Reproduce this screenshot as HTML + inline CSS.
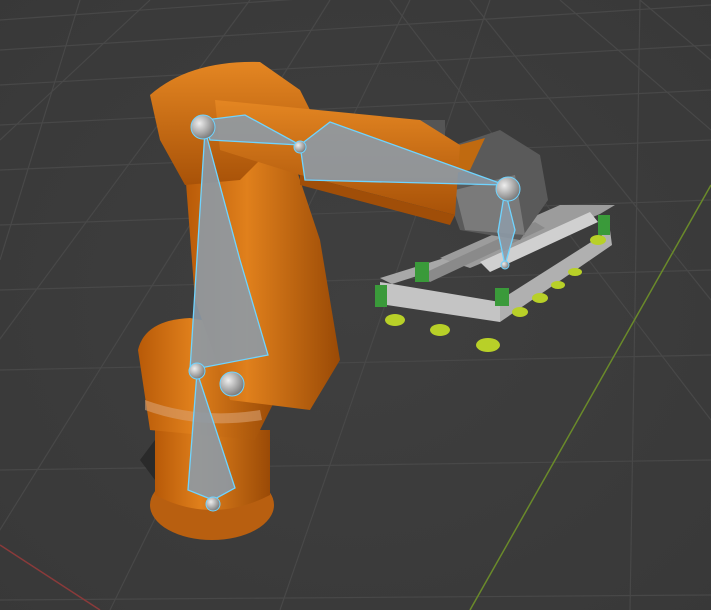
<!DOCTYPE html>
<html><head><meta charset="utf-8"><style>
html,body{margin:0;padding:0;background:#3d3d3d;width:711px;height:610px;overflow:hidden}
svg{display:block}
</style></head><body>
<svg width="711" height="610" viewBox="0 0 711 610" xmlns="http://www.w3.org/2000/svg">
<defs>
<linearGradient id="or" x1="0" y1="0" x2="1" y2="0">
<stop offset="0" stop-color="#b85a08"/><stop offset=".4" stop-color="#e0801c"/><stop offset="1" stop-color="#9a4a06"/>
</linearGradient>
<linearGradient id="or2" x1="0" y1="0" x2="0" y2="1">
<stop offset="0" stop-color="#e48622"/><stop offset="1" stop-color="#a85208"/>
</linearGradient>
<radialGradient id="sp" cx=".35" cy=".35" r=".7">
<stop offset="0" stop-color="#eee"/><stop offset="1" stop-color="#777"/>
</radialGradient>
<radialGradient id="bg" cx=".5" cy=".5" r=".75">
<stop offset="0" stop-color="#3f3f3f"/><stop offset="1" stop-color="#383838"/>
</radialGradient>
</defs>
<rect width="711" height="610" fill="url(#bg)"/>
<g stroke="#484848" stroke-width="1.2" fill="none">
<path d="M0 20 L711 -30"/><path d="M0 50 L711 5"/><path d="M0 85 L711 45"/><path d="M0 125 L711 90"/>
<path d="M0 170 L711 140"/><path d="M0 225 L711 200"/><path d="M0 290 L711 270"/><path d="M0 370 L711 355"/>
<path d="M0 470 L711 460"/><path d="M0 600 L711 595"/>
<path d="M-200 610 L250 0"/><path d="M-50 610 L330 0"/><path d="M110 610 L410 0"/><path d="M280 610 L490 0"/>
<path d="M630 610 L640 0"/><path d="M711 520 L720 0"/>
<path d="M0 140 L150 0"/><path d="M0 260 L80 0"/><path d="M560 0 L711 130"/><path d="M640 0 L711 60"/>
<path d="M711 300 L470 0"/><path d="M711 420 L390 0"/>
</g>
<path d="M470 610 L711 185" stroke="#6a8a2a" stroke-width="1.5"/>
<path d="M0 545 L100 610" stroke="#8a3a3a" stroke-width="1.5"/>

<!-- gripper frame (open) -->
<g>
<polygon points="380,282 500,302 500,322 380,304" fill="#c4c4c4"/>
<polygon points="380,278 470,250 480,256 392,284" fill="#a8a8a8"/>
<polygon points="500,300 610,230 612,245 500,322" fill="#b0b0b0"/>
<polygon points="440,258 560,205 615,205 600,214 470,268" fill="#9c9c9c"/>
<polygon points="480,262 590,212 598,222 490,272" fill="#d0d0d0"/>
<polygon points="420,275 535,222 545,228 430,282" fill="#8a8a8a"/>
<rect x="375" y="285" width="12" height="22" fill="#3a9a3a"/>
<rect x="415" y="262" width="14" height="20" fill="#3a9a3a"/>
<rect x="495" y="288" width="14" height="18" fill="#3a9a3a"/>
<rect x="598" y="215" width="12" height="20" fill="#3a9a3a"/>
<g fill="#b8d028">
<ellipse cx="395" cy="320" rx="10" ry="6"/><ellipse cx="440" cy="330" rx="10" ry="6"/><ellipse cx="488" cy="345" rx="12" ry="7"/>
<ellipse cx="520" cy="312" rx="8" ry="5"/><ellipse cx="540" cy="298" rx="8" ry="5"/><ellipse cx="558" cy="285" rx="7" ry="4"/>
<ellipse cx="575" cy="272" rx="7" ry="4"/><ellipse cx="598" cy="240" rx="8" ry="5"/>
</g>
</g>
<!-- gripper head -->
<path d="M440 150 L500 130 L540 155 L548 200 L520 240 L460 230 L445 190 Z" fill="#5a5a5a"/>
<path d="M455 190 L515 175 L525 235 L465 230 Z" fill="#7a7a7a"/>
<path d="M440 150 L485 138 L470 170 L445 175 Z" fill="#c06a10"/>
<rect x="400" y="120" width="45" height="22" fill="#555" />

<!-- base -->
<ellipse cx="212" cy="505" rx="62" ry="35" fill="#b85f10"/>
<path d="M155 430 L270 430 L270 495 Q212 525 155 495 Z" fill="url(#or)"/>
<path d="M138 350 Q145 320 190 318 L260 330 L275 400 L255 440 L150 430 Z" fill="url(#or)"/>
<path d="M145 400 Q200 420 260 410 L262 420 Q200 430 145 410 Z" fill="#d8a070" opacity=".6"/>
<!-- vertical arm -->
<path d="M185 170 L290 150 L320 240 L340 360 L310 410 L230 400 L195 300 Z" fill="url(#or)"/>
<!-- shoulder -->
<path d="M150 95 Q190 60 260 62 L300 90 L310 110 L240 180 L185 185 L160 140 Z" fill="url(#or2)"/>
<!-- horizontal arm -->
<path d="M215 100 L420 120 L460 145 L455 215 L300 175 L220 150 Z" fill="url(#or2)"/>
<path d="M300 175 L455 215 L450 225 L300 185 Z" fill="#a04e08"/>
<path d="M140 460 L155 440 L155 480 Z" fill="#2a2a2a"/>

<!-- bones -->
<g fill="#8d9aa6" fill-opacity=".9" stroke="#6fd4ff" stroke-width="1.3">
<polygon points="205,120 245,115 300,145 210,140"/>
<polygon points="300,145 330,122 505,185 305,180"/>
<polygon points="205,130 240,260 268,355 190,370"/>
<polygon points="505,190 515,230 505,265 498,232"/>
<polygon points="197,372 235,488 213,500 188,490"/>
</g>
<g fill="url(#sp)" stroke="#6fd4ff" stroke-width="1">
<circle cx="203" cy="127" r="12"/><circle cx="300" cy="147" r="6"/><circle cx="508" cy="189" r="12"/>
<circle cx="197" cy="371" r="8"/><circle cx="232" cy="384" r="12"/><circle cx="213" cy="504" r="7"/>
<circle cx="505" cy="265" r="4"/>
</g>
</svg>
</body></html>
